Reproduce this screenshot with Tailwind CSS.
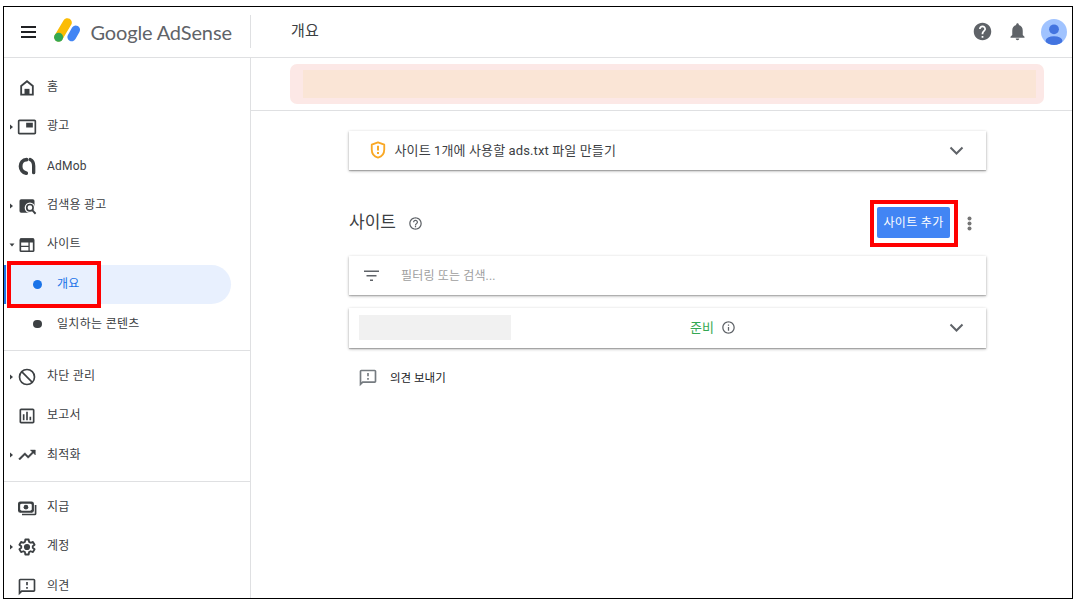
<!DOCTYPE html>
<html lang="ko">
<head>
  <meta charset="UTF-8" />
  <meta name="viewport" content="width=device-width, initial-scale=1.0" />
  <title>Google AdSense - 개요</title>
  <script src="https://cdn.jsdelivr.net/npm/@tailwindcss/browser@4"></script>
</head>
<body class="bg-white h-screen overflow-hidden pt-[6px] pl-[3px] font-[Roboto,'Noto_Sans_CJK_KR',sans-serif] text-[#3c4043]">

  <div class="w-[1070px] h-[593px] border border-black flex flex-col overflow-hidden">

    <!-- 상단 헤더 -->
    <header class="h-[51px] shrink-0 border-b border-[#dfe0e2] flex items-center">
      <div class="w-[247px] h-[33px] mb-[2px] border-r border-[#dfe0e2] flex items-center">
        <svg class="ml-[17px] mt-[2px] w-4 h-4 shrink-0 text-[#202124]" viewBox="0 0 16 16" fill="currentColor">
          <path d="M0 2h15v2H0zM0 7h15v2H0zM0 12h15v2H0z" />
        </svg>
        <svg class="ml-[16px] w-[28px] h-[26px] shrink-0" viewBox="0 0 28 26">
          <path d="M14.4 4.6L5.6 19.2" stroke="#fbbc04" stroke-width="8.8" stroke-linecap="round" />
          <path d="M22.7 11.8L18.7 19" stroke="#4285f4" stroke-width="8.6" stroke-linecap="round" />
          <circle cx="5.6" cy="19.2" r="4.5" fill="#34a853" />
        </svg>
        <span class="ml-[9.5px] mt-[2px] font-[Lato,sans-serif] text-[20px] leading-none tracking-[-0.15px] whitespace-nowrap text-[#5f6368]">Google AdSense</span>
      </div>
      <h1 class="ml-[40px] mb-[2px] text-[15px] tracking-[0.3px]">개요</h1>
      <div class="ml-auto mr-[5px] mb-[2px] flex items-center text-[#5f6368]">
        <svg class="w-[21px] h-[21px]" viewBox="0 0 24 24" fill="currentColor">
          <path d="M12 2C6.48 2 2 6.48 2 12s4.48 10 10 10 10-4.48 10-10S17.52 2 12 2zm1 17h-2v-2h2v2zm2.07-7.75l-.9.92C13.45 12.9 13 13.5 13 15h-2v-.5c0-1.1.45-2.1 1.17-2.83l1.24-1.26c.37-.36.59-.86.59-1.41 0-1.1-.9-2-2-2s-2 .9-2 2H8c0-2.21 1.79-4 4-4s4 1.79 4 4c0 .88-.36 1.68-.93 2.25z" />
        </svg>
        <svg class="ml-[14px] w-[21px] h-[21px]" viewBox="0 0 24 24" fill="currentColor">
          <path d="M12 22c1.1 0 2-.9 2-2h-4c0 1.1.89 2 2 2zm6-6v-5c0-3.07-1.64-5.64-4.5-6.32V4c0-.83-.67-1.5-1.5-1.5s-1.5.67-1.5 1.5v.68C7.63 5.36 6 7.92 6 11v5l-2 2v1h16v-1l-2-2z" />
        </svg>
        <svg class="ml-[13px] mt-[1px] w-[26px] h-[26px]" viewBox="0 0 26 26">
          <defs><clipPath id="avatar"><circle cx="13" cy="13" r="13" /></clipPath></defs>
          <g clip-path="url(#avatar)">
            <path fill="#a0c3ff" d="M0 0h26v26H0z" />
            <circle cx="13" cy="10.3" r="4.9" fill="#4374e0" />
            <ellipse cx="13" cy="21.8" rx="8.4" ry="4.6" fill="#4374e0" />
          </g>
        </svg>
      </div>
    </header>

    <div class="flex flex-1 min-h-0">

      <!-- 사이드바 -->
      <nav class="relative w-[247px] shrink-0 border-r border-[#dfe0e2] text-[12px] tracking-[0.2px] overflow-hidden">
        <div class="h-[293px] pt-[10px] border-b border-[#dfe0e2]">
          <a class="h-[39.3px] flex items-center">
            <span class="w-[13px]"></span>
            <svg class="w-5 h-5" viewBox="0 0 24 24" fill="none" stroke="currentColor" stroke-width="2.2">
              <path d="M5 20V9.5l7-5.7 7 5.7V20z" /><path d="M9 13h6v7H9z" fill="currentColor" stroke="none" />
            </svg>
            <span class="ml-[10px] mb-[2px]">홈</span>
          </a>
          <a class="h-[39.3px] flex items-center">
            <svg class="ml-[6px] mr-[3px] w-1 h-[6px]" viewBox="0 0 4 6" fill="currentColor"><path d="M0 .5L3 3 0 5.5z" /></svg>
            <svg class="w-5 h-5" viewBox="0 0 24 24" fill="currentColor">
              <path d="M21 3H3c-1.1 0-2 .9-2 2v14c0 1.1.9 2 2 2h18c1.1 0 2-.9 2-2V5c0-1.1-.9-2-2-2zm0 16H3V5h18v14zM11 7h8v5.5h-8z" />
            </svg>
            <span class="ml-[10px] mb-[1px]">광고</span>
          </a>
          <a class="h-[39.3px] flex items-center">
            <span class="w-[13px]"></span>
            <svg class="w-5 h-5" viewBox="0 0 24 24" fill="none" stroke="currentColor" stroke-linecap="round">
              <path d="M11.5 4.300C7 4.500 4.300 8 4.300 12.300c0 4.200 2.700 7.500 6.700 8.200" stroke-width="4.600" />
              <path d="M15.800 4.300C18.600 5.600 20 8.500 20 12v8" stroke-width="4" />
            </svg>
            <span class="ml-[10px]">AdMob</span>
          </a>
          <a class="h-[39.3px] flex items-center">
            <svg class="ml-[6px] mr-[3px] w-1 h-[6px]" viewBox="0 0 4 6" fill="currentColor"><path d="M0 .5L3 3 0 5.5z" /></svg>
            <svg class="w-5 h-5" viewBox="0 0 24 24">
              <path fill="currentColor" d="M5 4h14a2 2 0 0 1 2 2v14H5a2 2 0 0 1-2-2V6a2 2 0 0 1 2-2z" />
              <path d="M17 17l6 6" stroke="#fff" stroke-width="6" />
              <circle cx="15.5" cy="14" r="6.3" fill="#fff" />
              <circle cx="15.5" cy="14" r="3.8" fill="none" stroke="currentColor" stroke-width="2" />
              <path d="M18 16.7l4.3 4.6" stroke="currentColor" stroke-width="2.2" />
            </svg>
            <span class="ml-[10px] mb-[2px]">검색용 광고</span>
          </a>
          <a class="h-[39.3px] flex items-center">
            <svg class="ml-[5px] mr-[2px] w-[6px] h-1" viewBox="0 0 6 4" fill="currentColor"><path d="M.5.5h5L3 3.5z" /></svg>
            <svg class="w-5 h-5" viewBox="0 0 24 24" fill="none" stroke="currentColor" stroke-width="2">
              <rect x="4" y="5" width="16" height="14.5" rx="1" /><path d="M4 6.5h16" stroke-width="5" /><path d="M4 13.7h10M14.5 8v12" stroke-width="1.6" />
            </svg>
            <span class="ml-[10px] mb-[2px]">사이트</span>
          </a>
          <a class="mt-[0.5px] h-[39px] w-[227px] flex items-center bg-[#e8f0fe] rounded-r-full border-l-2 border-[#1a73e8] text-[#1a73e8]">
            <span class="ml-[27px] w-[8.5px] h-[8.5px] rounded-full bg-[#1a73e8]"></span>
            <span class="ml-[15.5px] mb-[1px]">개요</span>
          </a>
          <a class="h-[39.3px] flex items-center">
            <span class="ml-[29px] mt-[1px] w-[8.5px] h-[8.5px] rounded-full bg-[#3c4043]"></span>
            <span class="ml-[15.5px] tracking-[0.3px]">일치하는 콘텐츠</span>
          </a>
        </div>

        <div class="h-[131px] pt-[6px] border-b border-[#dfe0e2]">
          <a class="h-[39.3px] flex items-center">
            <svg class="ml-[6px] mr-[3px] w-1 h-[6px]" viewBox="0 0 4 6" fill="currentColor"><path d="M0 .5L3 3 0 5.5z" /></svg>
            <svg class="w-5 h-5" viewBox="0 0 24 24" fill="none" stroke="currentColor" stroke-width="2">
              <circle cx="12" cy="12" r="9" /><path d="M5.6 5.6l12.8 12.8" />
            </svg>
            <span class="ml-[10px] mb-[2px]">차단 관리</span>
          </a>
          <a class="h-[39.3px] flex items-center">
            <span class="w-[13px]"></span>
            <svg class="w-5 h-5" viewBox="0 0 24 24" fill="currentColor">
              <path d="M19 3H5c-1.1 0-2 .9-2 2v14c0 1.1.9 2 2 2h14c1.1 0 2-.9 2-2V5c0-1.1-.9-2-2-2zm0 16H5V5h14v14zM7 10h2v7H7zm4-3h2v10h-2zm4 6h2v4h-2z" />
            </svg>
            <span class="ml-[10px] mb-[2px]">보고서</span>
          </a>
          <a class="h-[39.3px] flex items-center">
            <svg class="ml-[6px] mr-[3px] w-1 h-[6px]" viewBox="0 0 4 6" fill="currentColor"><path d="M0 .5L3 3 0 5.5z" /></svg>
            <svg class="w-5 h-5" viewBox="0 0 24 24" fill="currentColor" stroke="currentColor" stroke-width=".5">
              <path d="M16 6l2.29 2.29-4.88 4.88-4-4L2 16.59 3.41 18l6-6 4 4 6.3-6.29L22 12V6z" />
            </svg>
            <span class="ml-[10px] mb-[1px]">최적화</span>
          </a>
        </div>

        <div class="pt-[6px]">
          <a class="h-[39.3px] flex items-center">
            <span class="w-[13px]"></span>
            <svg class="w-5 h-5" viewBox="0 0 24 24" fill="none" stroke="currentColor" stroke-width="2">
              <rect x="2.5" y="5.500" width="16.5" height="11" rx="1.5" stroke-width="2.6" /><circle cx="10.75" cy="11" r="2.8" fill="currentColor" stroke="none" />
              <path d="M2 8L5 5.5M19.5 8l-3-2.5M2 14L5 16.5M19.5 14l-3 2.500" />
              <path d="M22.3 8.5v10.3a1 1 0 0 1-1 1H6" />
            </svg>
            <span class="ml-[10px] mb-[2px]">지급</span>
          </a>
          <a class="h-[39.3px] flex items-center">
            <svg class="ml-[6px] mr-[3px] w-1 h-[6px]" viewBox="0 0 4 6" fill="currentColor"><path d="M0 .5L3 3 0 5.5z" /></svg>
            <svg class="w-5 h-5" viewBox="0 0 24 24" fill="none" stroke="currentColor" stroke-width="2.2" stroke-linejoin="round">
              <path d="M10 3h4l.5 2.8 1.9 1.1 2.7-1 2 3.4-2.2 1.8v1.8l2.2 1.8-2 3.4-2.7-1-1.9 1.1L14 21h-4l-.5-2.8-1.9-1.1-2.7 1-2-3.4 2.2-1.8v-1.8L2.9 9.3l2-3.4 2.7 1 1.9-1.1z" />
              <circle cx="12" cy="12" r="3.7" fill="currentColor" stroke="none" />
            </svg>
            <span class="ml-[10px] mb-[1px]">계정</span>
          </a>
          <a class="h-[39.3px] flex items-center">
            <span class="w-[13px]"></span>
            <svg class="w-5 h-5 mt-[1px]" viewBox="0 0 24 24" fill="currentColor">
              <path d="M20 2H4c-1.1 0-2 .9-2 2v18l4-4h14c1.1 0 2-.9 2-2V4c0-1.1-.9-2-2-2zm0 14H5.2L4 17.2V4h16v12zM11 12h2v2h-2zm0-6h2v4h-2z" />
            </svg>
            <span class="ml-[10px] mb-[1px]">의견</span>
          </a>
        </div>

        <!-- 강조 표시 -->
        <div class="absolute left-[3px] top-[203px] w-[94px] h-[47px] border-4 border-[#ff0000]"></div>
      </nav>

      <!-- 본문 -->
      <main class="flex-1">
        <div class="h-[53px] pt-[6px] pl-[39px] border-b border-[#dfe0e2]">
          <div class="w-[754px] h-10 rounded-[7px] bg-[#fce8e6] pt-[6px] pl-[13px]">
            <div class="w-[733px] h-7 bg-[#fae5d6]"></div>
          </div>
        </div>

        <div class="ml-[98px] w-[637px] pt-[20px]">
          <div class="h-[39px] flex items-center bg-white shadow-[0_1px_3px_rgba(0,0,0,0.3),0_1px_1px_rgba(0,0,0,0.2)]">
            <svg class="ml-[19px] mb-[1px] w-[20px] h-[20px] text-[#f9a825]" viewBox="0 0 24 24" fill="none" stroke="currentColor" stroke-width="2.2">
              <path d="M12 2.8L4.5 5.6v5.7c0 4.6 3 8.6 7.5 9.9 4.5-1.3 7.5-5.3 7.5-9.9V5.6z" stroke-linejoin="round" />
              <path d="M12 7v5.5M12 14.3v2.4" stroke-width="2.4" />
            </svg>
            <span class="ml-[6.5px] text-[13px] tracking-[0.12px]">사이트 1개에 사용할 ads.txt 파일 만들기</span>
            <svg class="ml-auto mr-[22px] w-[15px] h-[15px] text-[#5f6368]" viewBox="0 0 15 15" fill="none" stroke="currentColor" stroke-width="2"><path d="M1.5 4.5l6 6 6-6" /></svg>
          </div>

          <div class="mt-[30px] h-[47px] flex items-center">
            <h2 class="text-[17px] mb-[1px]">사이트</h2>
            <svg class="ml-[12px] mb-[1px] w-[15px] h-[15px] text-[#5f6368]" viewBox="0 0 24 24" fill="currentColor">
              <path d="M11 18h2v-2h-2v2zm1-16C6.48 2 2 6.48 2 12s4.48 10 10 10 10-4.48 10-10S17.52 2 12 2zm0 18c-4.41 0-8-3.59-8-8s3.59-8 8-8 8 3.59 8 8-3.59 8-8 8zm0-14c-2.21 0-4 1.79-4 4h2c0-1.1.9-2 2-2s2 .9 2 2c0 2-3 1.75-3 5h2c0-2.25 3-2.5 3-5 0-2.21-1.79-4-4-4z" />
            </svg>
            <div class="ml-auto w-[88px] h-[47px] border-4 border-[#ff0000] pt-[3px] pl-[3px]">
              <button class="w-[73px] h-[31px] pt-[1px] flex items-center justify-center rounded-[2px] bg-[#4285f4] text-white text-[12px] tracking-[0.3px] whitespace-nowrap">사이트 추가</button>
            </div>
            <svg class="ml-[9px] mr-[14px] mb-[1px] w-[5px] h-[15px] text-[#757575]" viewBox="0 0 5 15" fill="currentColor">
              <circle cx="2.5" cy="2.5" r="2" /><circle cx="2.5" cy="7.5" r="2" /><circle cx="2.5" cy="12.5" r="2" />
            </svg>
          </div>

          <div class="mt-[9px] h-[39px] flex items-center bg-white shadow-[0_1px_3px_rgba(0,0,0,0.3),0_1px_1px_rgba(0,0,0,0.15)]">
            <svg class="ml-[15px] w-[15px] h-[11px] text-[#5f6368]" viewBox="0 0 15 11" fill="currentColor"><path d="M0 .5h15V2H0zM2.5 5h10v1.5h-10zM6 9.5h3V11H6z" /></svg>
            <span class="ml-[22px] text-[12px] tracking-[0.15px] text-[#9e9e9e]">필터링 또는 검색...</span>
          </div>

          <div class="mt-[13px] h-[40px] flex items-center bg-white shadow-[0_1px_3px_rgba(0,0,0,0.3),0_1px_1px_rgba(0,0,0,0.2)]">
            <div class="ml-[10px] mb-[1px] w-[152px] h-[25px] bg-[#f1f1f1]"></div>
            <span class="ml-[179px] mb-[1px] text-[13px] text-[#34a853]">준비</span>
            <svg class="ml-[7px] mb-[1px] w-[15px] h-[15px] text-[#5f6368]" viewBox="0 0 24 24" fill="currentColor">
              <path d="M11 17h2v-6h-2v6zm1-15C6.48 2 2 6.48 2 12s4.48 10 10 10 10-4.48 10-10S17.52 2 12 2zm0 18c-4.41 0-8-3.59-8-8s3.59-8 8-8 8 3.59 8 8-3.59 8-8 8zM11 9h2V7h-2v2z" />
            </svg>
            <svg class="ml-auto mr-[22px] mb-[1px] w-[15px] h-[15px] text-[#5f6368]" viewBox="0 0 15 15" fill="none" stroke="currentColor" stroke-width="2"><path d="M1.5 4.5l6 6 6-6" /></svg>
          </div>

          <div class="mt-[20px] h-5 flex items-center">
            <svg class="ml-[9px] w-5 h-5 text-[#757b80]" viewBox="0 0 24 24" fill="currentColor">
              <path d="M20 2H4c-1.1 0-2 .9-2 2v18l4-4h14c1.1 0 2-.9 2-2V4c0-1.1-.9-2-2-2zm0 14H5.2L4 17.2V4h16v12zM11 12h2v2h-2zm0-6h2v4h-2z" />
            </svg>
            <span class="ml-[12px] mt-[1px] text-[11.5px] text-[#202124]">의견 보내기</span>
          </div>
        </div>
      </main>

    </div>
  </div>

</body>
</html>
